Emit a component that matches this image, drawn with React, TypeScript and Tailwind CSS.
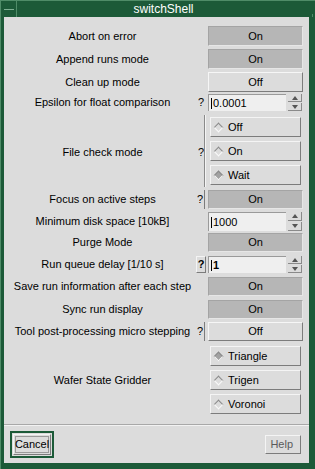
import type { ReactNode } from 'react'

const OnBtn = () => (
  <div className="w-[95px] h-full bg-[#b6b6b6] border-t border-l border-[#a4a4a4] border-b border-r border-b-[#e6e6e6] border-r-[#e6e6e6] flex items-center justify-center">
    On
  </div>
)

const OffBtn = ({ w = 'w-[95px]' }: { w?: string }) => (
  <div className={`${w} h-full bg-[#dcdcdc] border-t border-l border-[#f6f6f6] border-b border-r border-b-[#7c7c7c] border-r-[#7c7c7c] flex items-center justify-center`}>
    Off
  </div>
)

const Radio = ({ label, on }: { label: string; on?: boolean }) => (
  <div className="ml-[2px] w-[91px] h-[20px] bg-[#dcdcdc] border border-t-[#f4f4f4] border-l-[#f4f4f4] border-b-[#7c7c7c] border-r-[#7c7c7c] flex items-center">
    <span
      className={`ml-[4px] w-[7px] h-[7px] rotate-45 border border-t-[#8a8a8a] border-l-[#8a8a8a] border-b-[#fafafa] border-r-[#fafafa] ${on ? 'bg-[#a2a2a2]' : 'bg-transparent'}`}
    />
    <span className="ml-[6px]">{label}</span>
  </div>
)

const Spin = ({ value, bold, h = 'h-[17px]' }: { value: string; bold?: boolean; h?: string }) => (
  <div className={`flex items-center w-[95px] ${h}`}>
    <div className={`w-[78px] h-full bg-[#efefef] border-t border-l border-[#9a9a9a] flex items-center pl-[2px] ${bold ? 'font-bold' : ''}`}>
      <span className="w-px h-[11px] bg-black mr-[1px]" />
      {value}
    </div>
    <div className="ml-[2px] w-[14px] h-full flex flex-col gap-px">
      <div className="flex-1 border-r border-b border-[#8a8a8a] flex items-center justify-center">
        <span className="w-0 h-0 border-l-[3px] border-r-[3px] border-b-[4px] border-l-transparent border-r-transparent border-b-[#555]" />
      </div>
      <div className="flex-1 border-r border-b border-[#8a8a8a] flex items-center justify-center">
        <span className="w-0 h-0 border-l-[3px] border-r-[3px] border-t-[4px] border-l-transparent border-r-transparent border-t-[#555]" />
      </div>
    </div>
  </div>
)

type Help = 'plain' | 'bar' | 'box' | 'none'

const Row = ({ label, help = 'none', mt, h, children }: { label: string; help?: Help; mt: string; h: string; children: ReactNode }) => (
  <div className={`flex items-center ${mt} ${h}`}>
    <div className="ml-[4px] w-[189px] text-center whitespace-nowrap">{label}</div>
    <div className="w-[11px] h-full flex items-center">
      {help === 'plain' && <span className="ml-[1px]">?</span>}
      {help === 'bar' && (
        <span className="h-full flex items-center w-[8px] border-r border-r-[#7c7c7c]">?</span>
      )}
      {help === 'box' && (
        <span className="-ml-[1px] w-[10px] h-[17px] border border-t-[#f4f4f4] border-l-[#f4f4f4] border-b-[#7c7c7c] border-r-[#7c7c7c] flex items-center justify-center font-bold">
          ?
        </span>
      )}
    </div>
    {children}
  </div>
)

export default function App() {
  return (
    <div className="w-[315px] h-[469px] bg-[#1c5a38] border-t border-l border-[#4f8c68] flex flex-col font-['Liberation_Sans',Arial,sans-serif] text-[11px] text-black overflow-hidden">
      {/* title bar */}
      <div className="h-[16px] flex shrink-0">
        <div className="w-[16px] border-r border-[#4f8c68] flex items-center justify-center">
          <span className="w-[10px] h-px bg-[#7fb093]" />
        </div>
        <div className="flex-1 flex items-center justify-center text-white text-[12px] pr-[2px]">switchShell</div>
        <div className="w-[3px] border-l border-[#4f8c68] mt-[13px]" />
      </div>

      <div className="flex-1 ml-[3px] mr-[6px] mb-[6px] bg-[#dcdcdc] flex flex-col">
        <Row label="Abort on error" mt="mt-[9px]" h="h-[20px]">
          <OnBtn />
        </Row>
        <Row label="Append runs mode" mt="mt-[3px]" h="h-[20px]">
          <OnBtn />
        </Row>
        <Row label="Clean up mode" mt="mt-[3px]" h="h-[20px]">
          <OffBtn />
        </Row>
        <Row label="Epsilon for float comparison" help="plain" mt="mt-[2px]" h="h-[17px]">
          <Spin value="0.0001" />
        </Row>
        <Row label="File check mode" help="plain" mt="mt-[4px]" h="h-[74px]">
          <div className="relative h-full flex flex-col gap-[4px] pt-[2px]">
            <span className="absolute -left-[4px] top-0 bottom-[2px] w-[2px] border-l border-[#8a8a8a] border-r border-r-[#f4f4f4]" />
            <Radio label="Off" />
            <Radio label="On" />
            <Radio label="Wait" on />
          </div>
        </Row>
        <Row label="Focus on active steps" help="bar" mt="mt-[1px]" h="h-[19px]">
          <OnBtn />
        </Row>
        <Row label="Minimum disk space [10kB]" mt="mt-[3px]" h="h-[19px]">
          <Spin value="1000" h="h-[19px]" />
        </Row>
        <Row label="Purge Mode" mt="mt-[2px]" h="h-[19px]">
          <OnBtn />
        </Row>
        <Row label="Run queue delay [1/10 s]" help="box" mt="mt-[4px]" h="h-[17px]">
          <Spin value="1" bold />
        </Row>
        <Row label="Save run information after each step" mt="mt-[4px]" h="h-[19px]">
          <OnBtn />
        </Row>
        <Row label="Sync run display" mt="mt-[4px]" h="h-[19px]">
          <OnBtn />
        </Row>
        <Row label="Tool post-processing micro stepping" help="bar" mt="mt-[3px]" h="h-[19px]">
          <OffBtn />
        </Row>
        <Row label="Wafer State Gridder" mt="mt-[3px]" h="h-[72px]">
          <div className="h-full flex flex-col gap-[4px] pt-[2px]">
            <Radio label="Triangle" on />
            <Radio label="Trigen" />
            <Radio label="Voronoi" />
          </div>
        </Row>

        <div className="mt-[8px] border-t border-[#a8a8a8] border-b border-b-[#f2f2f2]" />

        <div className="flex-1 flex items-center justify-between pl-[6px] pr-[8px]">
          <div className="w-[44px] h-[27px] border-2 border-[#1c5a38] p-px">
            <div className="w-full h-full border border-t-[#f4f4f4] border-l-[#f4f4f4] border-b-[#7c7c7c] border-r-[#7c7c7c] p-px">
              <div className="w-full h-full border border-[#9a9a9a] flex items-center justify-center">Cancel</div>
            </div>
          </div>
          <div className="w-[36px] h-[19px] border border-t-[#f4f4f4] border-l-[#f4f4f4] border-b-[#7c7c7c] border-r-[#7c7c7c] flex items-center justify-end pr-[7px] text-[#5a5a5a]">
            Help
          </div>
        </div>
      </div>
    </div>
  )
}
